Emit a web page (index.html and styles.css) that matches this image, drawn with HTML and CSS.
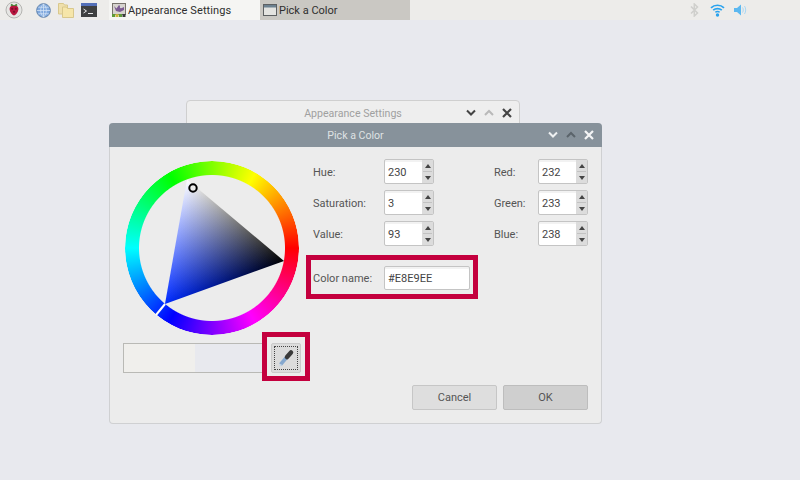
FILE: index.html
```html
<!DOCTYPE html>
<html lang="en">
<head>
<meta charset="utf-8">
<title>Pick a Color</title>
<link rel="stylesheet" href="styles.css">
</head>
<body>
<header class="taskbar">
  <div class="launchers">
    <svg class="ic-rpi" width="20" height="20" viewBox="0 0 20 20">
      <circle cx="10" cy="10" r="8" fill="#e6e6e4" stroke="#b5b5b2" stroke-width="1"/>
      <path d="M10 6.500 7 4.500M10 6.500 13 4.500" stroke="#3f8a34" stroke-width="2"/>
      <path d="M10 6c3-.7 4.700 1.200 4.400 3.600-.3 2.900-2.300 5.400-4.400 5.900-2.100-.5-4.100-3-4.400-5.900C5.300 7.200 7 5.300 10 6z" fill="#b8163f"/>
      <circle cx="8.200" cy="8.800" r="1.100" fill="#7d0d2a"/><circle cx="11.800" cy="8.800" r="1.100" fill="#7d0d2a"/><circle cx="10" cy="11.800" r="1.100" fill="#7d0d2a"/>
    </svg>
    <svg class="ic-globe" width="15" height="15" viewBox="0 0 16 16">
      <circle cx="8" cy="8" r="7.300" fill="#7fa8de" stroke="#5d7fa8"/>
      <path d="M1 8h14M8 1v14M2.500 4.500h11M2.500 11.500h11M8 1c-4 3.500-4 10.500 0 14M8 1c4 3.500 4 10.500 0 14" fill="none" stroke="#d7e5f5" stroke-width=".8"/>
    </svg>
    <svg class="ic-folder" width="16" height="15" viewBox="0 0 16 15">
      <path d="M.5.500h5l1 1.500h3v9h-9z" fill="#efe0ac" stroke="#d9c88c"/>
      <path d="M4.500 4h4l1 1.500h6v9h-11z" fill="#f6e6a9" stroke="#d9c88c"/>
    </svg>
    <svg class="ic-term" width="16" height="14" viewBox="0 0 16 14">
      <rect width="16" height="14" fill="#3f4040"/>
      <rect width="16" height="3" fill="#5470b8"/>
      <path d="M2.500 6 5.500 8 2.500 10" fill="none" stroke="#e8e8e8"/>
      <path d="M7 10.500h5" stroke="#e8e8e8"/>
    </svg>
  </div>
  <div class="task task-active">
    <svg width="14" height="14" viewBox="0 0 14 14">
      <rect x=".5" y=".5" width="13" height="11" fill="#d6d3ce" stroke="#77736c"/>
      <path d="M2 3l2.500 2.500L7 2l3 3 2-1v3L8 9 4 8z" fill="#7b5a92"/>
      <circle cx="9" cy="4" r="1.200" fill="#d8d8d8"/>
      <rect y="11" width="3" height="3" fill="#5d9a3a"/><rect x="3.500" y="11" width="3" height="3" fill="#c9b53a"/><rect x="7" y="11" width="3" height="3" fill="#5d9a3a"/><rect x="10.500" y="11" width="3" height="3" fill="#3a3b3b"/>
    </svg>
    <span>Appearance Settings</span>
  </div>
  <div class="task task-other">
    <svg width="14" height="14" viewBox="0 0 14 14">
      <rect x=".5" y="1.500" width="13" height="11" fill="#e3e3e0" stroke="#5d6062"/>
      <rect x="1" y="2" width="12" height="2.500" fill="#6c8190"/>
    </svg>
    <span>Pick a Color</span>
  </div>
  <div class="tray">
    <svg class="ic-bt" width="9" height="14" viewBox="0 0 9 14"><path d="M1 3.500 7.500 10 4.300 13V1l3.200 3L1 10.500" fill="none" stroke="#cfcfcc" stroke-width="1.500"/></svg>
    <svg class="ic-wifi" width="15" height="14" viewBox="0 0 15 14">
      <path d="M1 4.800C4.500 1.400 10.500 1.400 14 4.800M3.200 7.200c2.400-2.200 6.200-2.200 8.600 0" fill="none" stroke="#2aa3ee" stroke-width="1.700"/>
      <path d="M5.300 9.300c1.300-1 3.100-1 4.400 0" fill="none" stroke="#2aa3ee" stroke-width="1.400"/>
      <circle cx="7.500" cy="12" r="1.700" fill="#2aa3ee"/>
    </svg>
    <svg class="ic-vol" width="13" height="12" viewBox="0 0 13 12">
      <path d="M0 4h3l4-3.500v11L3 8H0z" fill="#5cb8f0"/>
      <path d="M8.500 3.500c1 1.500 1 3.500 0 5M10.500 2c1.600 2.400 1.600 5.600 0 8" fill="none" stroke="#a9d8f5"/>
    </svg>
  </div>
</header>

<main class="desktop">
  <section class="window back-window">
    <div class="back-title">
      <span class="title-text">Appearance Settings</span>
      <div class="win-btns">
        <svg width="10" height="8" viewBox="0 0 10 8"><path d="M1 1.500 5 5.500 9 1.500" fill="none" stroke="#444" stroke-width="2"/></svg>
        <svg width="10" height="8" viewBox="0 0 10 8"><path d="M1 6 5 2 9 6" fill="none" stroke="#b9b9b9" stroke-width="2"/></svg>
        <svg width="10" height="10" viewBox="0 0 10 10"><path d="M1 1 9 9M9 1 1 9" fill="none" stroke="#444" stroke-width="2.200"/></svg>
      </div>
    </div>
  </section>

  <section class="window dialog">
    <div class="dialog-title">
      <span class="title-text">Pick a Color</span>
      <div class="win-btns">
        <svg width="10" height="8" viewBox="0 0 10 8"><path d="M1 1.500 5 5.500 9 1.500" fill="none" stroke="#eef0f1" stroke-width="2"/></svg>
        <svg width="10" height="8" viewBox="0 0 10 8"><path d="M1 6 5 2 9 6" fill="none" stroke="#5b646b" stroke-width="2"/></svg>
        <svg width="10" height="10" viewBox="0 0 10 10"><path d="M1 1 9 9M9 1 1 9" fill="none" stroke="#f4f5f6" stroke-width="2.200"/></svg>
      </div>
    </div>
    <div class="dialog-body">
      <div class="main-row">
        <div class="left-col">
          <div class="wheel-box">
            <div class="wheel"></div>
            <svg class="wheel-overlay" width="174" height="174" viewBox="0 0 174 174">
              <defs>
                <linearGradient id="hueGrad" gradientUnits="userSpaceOnUse" x1="40" y1="143" x2="110.400" y2="59.200">
                  <stop offset="0" stop-color="#002bff"/><stop offset="1" stop-color="#000"/>
                </linearGradient>
                <linearGradient id="whiteGrad" gradientUnits="userSpaceOnUse" x1="62" y1="18.500" x2="99.500" y2="121.500">
                  <stop offset="0" stop-color="#fff"/><stop offset="1" stop-color="#000"/>
                </linearGradient>
                <clipPath id="triClip"><polygon points="62,18.500 159,100 40,143"/></clipPath>
              </defs>
              <g clip-path="url(#triClip)">
                <rect width="174" height="174" fill="url(#hueGrad)"/>
                <rect class="tri-add" width="174" height="174" fill="url(#whiteGrad)"/>
              </g>
              <path d="M31 154 40 143" stroke="#fff" stroke-width="2"/>
              <circle cx="68" cy="27" r="3.700" fill="#ececec" stroke="#000" stroke-width="2"/>
            </svg>
          </div>
          <div class="preview-row">
            <div class="preview">
              <div class="swatch-old"></div>
              <div class="swatch-new"></div>
            </div>
            <button class="pick-btn" type="button">
              <span class="pick-dots">
                <svg width="18" height="18" viewBox="0 0 18 18">
                  <path d="M3.500 15.500 9.500 8.500" stroke="#85a8cf" stroke-width="3.500"/>
                  <path d="M2.500 16.500 4.500 15.800" stroke="#c4d4e6" stroke-width="1.500"/>
                  <path d="M10 8 14 3.500" stroke="#3a3a3a" stroke-width="4.500" stroke-linecap="round"/>
                </svg>
              </span>
            </button>
          </div>
        </div>
        <form class="form">
          <div class="fields">
            <label class="lbl">Hue:</label>
            <div class="spin"><span class="spin-val">230</span><span class="spin-btns"><i class="up"></i><i class="down"></i></span></div>
            <label class="lbl lbl-r">Red:</label>
            <div class="spin"><span class="spin-val">232</span><span class="spin-btns"><i class="up"></i><i class="down"></i></span></div>
            <label class="lbl">Saturation:</label>
            <div class="spin"><span class="spin-val">3</span><span class="spin-btns"><i class="up"></i><i class="down"></i></span></div>
            <label class="lbl lbl-r">Green:</label>
            <div class="spin"><span class="spin-val">233</span><span class="spin-btns"><i class="up"></i><i class="down"></i></span></div>
            <label class="lbl">Value:</label>
            <div class="spin"><span class="spin-val">93</span><span class="spin-btns"><i class="up"></i><i class="down"></i></span></div>
            <label class="lbl lbl-r">Blue:</label>
            <div class="spin"><span class="spin-val">238</span><span class="spin-btns"><i class="up"></i><i class="down"></i></span></div>
          </div>
          <div class="name-row">
            <label class="lbl">Color name:</label>
            <div class="name-input">#E8E9EE</div>
          </div>
        </form>
      </div>
      <div class="footer">
        <button class="btn btn-cancel" type="button">Cancel</button>
        <button class="btn btn-ok" type="button">OK</button>
      </div>
    </div>
    <div class="callout callout-name"></div>
    <div class="callout callout-pick"></div>
  </section>
</main>
</body>
</html>
```
FILE: styles.css
```css
* { box-sizing: border-box; }
html, body { margin: 0; height: 100%; }
body {
  width: 800px;
  height: 480px;
  overflow: hidden;
  background: #e8e9ee;
  font-family: Roboto, "Liberation Sans", sans-serif;
  font-size: 11px;
  color: #555;
  display: flex;
  flex-direction: column;
}

/* Taskbar */
.taskbar {
  height: 20px;
  flex: none;
  background: #edecea;
  display: flex;
  align-items: center;
  color: #2e2e2e;
}
.launchers {
  width: 109px;
  height: 20px;
  display: flex;
  align-items: center;
  padding-left: 4px;
}
.ic-globe { margin-left: 12px; }
.ic-folder { margin-left: 7px; }
.ic-term { margin-left: 7px; }
.task {
  width: 151px;
  height: 20px;
  display: flex;
  align-items: center;
  gap: 2px;
  padding-left: 3px;
  white-space: nowrap;
}
.task-active { background: #f5f5f3; letter-spacing: .1px; }
.task-other { width: 150px; background: #cac8c3; }
.tray {
  margin-left: auto;
  display: flex;
  align-items: center;
  padding-right: 53px;
}
.ic-wifi { margin-left: 11px; }
.ic-vol { margin-left: 9px; }

/* Windows */
.desktop { position: relative; flex: 1; }
.window { position: absolute; }
.back-window {
  left: 186px;
  top: 80px;
  width: 334px;
  height: 50px;
  background: #eeeeee;
  border: 1px solid #cfcfcf;
  border-radius: 4px 4px 0 0;
}
.back-title, .dialog-title {
  position: relative;
  display: flex;
  align-items: center;
  justify-content: center;
}
.title-text { font-size: 10.6px; }
.back-title { height: 24px; color: #a0a0a0; }
.win-btns {
  position: absolute;
  top: 0;
  bottom: 0;
  display: flex;
  align-items: center;
  gap: 8px;
}
.back-title .win-btns { right: 7px; }
.dialog-title .win-btns { right: 8px; }

.dialog {
  left: 109px;
  top: 103px;
  width: 493px;
  height: 301px;
  background: #ececec;
  border: 1px solid #cfd0d2;
  border-top: 0;
  border-radius: 4px;
}
.dialog-title {
  height: 24px;
  margin: 0 -1px;
  background: #87929b;
  color: #dfe2e4;
  border-radius: 4px 4px 0 0;
}
.dialog-body { padding: 12px 13px 0; }
.main-row { display: flex; gap: 12px; }
.left-col { width: 178px; display: flex; flex-direction: column; gap: 8px; }
.wheel-box { position: relative; width: 174px; height: 174px; margin: 2px 0 0 2px; }
.wheel {
  width: 174px;
  height: 174px;
  border-radius: 50%;
  background: conic-gradient(from 90deg, #f00, #f0f, #00f, #0ff, #0f0, #ff0, #f00);
  -webkit-mask: radial-gradient(circle at center, transparent 72.500px, #000 73.500px, #000 86.500px, transparent 87.500px);
  mask: radial-gradient(circle at center, transparent 72.500px, #000 73.500px, #000 86.500px, transparent 87.500px);
}
.wheel-overlay { position: absolute; left: 0; top: 0; }
.tri-add { mix-blend-mode: plus-lighter; }

.preview-row { display: flex; gap: 8px; height: 30px; }
.preview { width: 140px; display: flex; border: 1px solid #b9b9b5; }
.swatch-old { width: 71px; background: #f0efec; }
.swatch-new { flex: 1; background: #e8e9ee; }
.pick-btn {
  width: 30px;
  height: 30px;
  padding: 2px;
  background: #dcdcdc;
  border: 1px solid #cbcbcb;
  border-radius: 2px;
}
.pick-dots {
  display: flex;
  align-items: center;
  justify-content: center;
  width: 100%;
  height: 100%;
  border: 1px dotted #444;
}

/* Form */
.form { display: flex; flex-direction: column; gap: 20px; padding-top: 0; }
.fields {
  display: grid;
  grid-template-columns: 71px 50px 104px 50px;
  grid-auto-rows: 25px;
  row-gap: 6px;
}
.lbl { display: flex; align-items: center; padding-top: 1px; color: #555; white-space: nowrap; }
.lbl-r { padding-left: 60px; }
.spin {
  display: flex;
  background: #fff;
  border: 1px solid #c4c4c4;
  border-radius: 2px;
  box-shadow: inset 0 2px 0 #f2f2f2;
}
.spin-val { flex: 1; display: flex; align-items: center; padding: 1px 0 0 3px; color: #444; }
.spin-btns {
  width: 11px;
  background: #dcdcdc;
  display: flex;
  flex-direction: column;
  align-items: center;
  justify-content: space-between;
  padding: 4px 0 3px;
  position: relative;
}
.spin-btns::after {
  content: "";
  position: absolute;
  left: 1px;
  right: 1px;
  top: 11px;
  height: 1px;
  background: #c2c2c2;
}
.spin-btns i { width: 0; height: 0; border-left: 3.500px solid transparent; border-right: 3.500px solid transparent; }
.spin-btns .up { border-bottom: 4px solid #444; }
.spin-btns .down { border-top: 4px solid #444; }
.name-row { display: flex; height: 24px; }
.name-row .lbl { width: 71px; }
.name-input {
  width: 86px;
  display: flex;
  align-items: center;
  padding-left: 3px;
  background: #fff;
  border: 1px solid #c4c4c4;
  border-radius: 2px;
  box-shadow: inset 0 2px 0 #f2f2f2;
  color: #444;
}

/* Footer */
.footer { display: flex; justify-content: flex-end; gap: 6px; margin-top: 12px; }
.btn {
  width: 85px;
  height: 25px;
  font: inherit;
  color: #555;
  border: 1px solid #c6c6c6;
  border-radius: 2px;
  padding: 0;
}
.btn-cancel { background: #dedede; }
.btn-ok { background: #cfcfcf; border-color: #bdbdbd; }

/* Annotation rectangles */
.callout { position: absolute; border: 5px solid #c4003e; }
.callout-name { left: 196px; top: 132px; width: 172px; height: 44px; }
.callout-pick { left: 152px; top: 209px; width: 48px; height: 49px; }
```
